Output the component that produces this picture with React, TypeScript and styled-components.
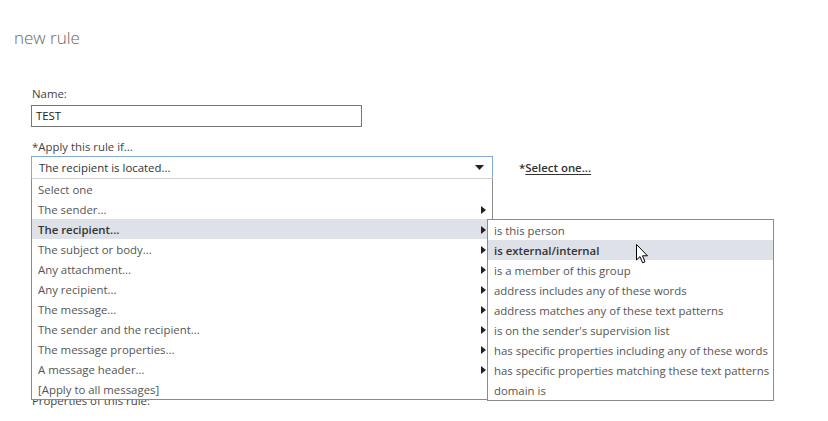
import React from "react";
import styled, { createGlobalStyle } from "styled-components";

const GlobalStyle = createGlobalStyle`
  body {
    margin: 0;
    background: #ffffff;
    font-family: "Open Sans", "Noto Sans", sans-serif;
    color: #444;
  }
`;

const conditions = [
  { label: "Select one", sub: false },
  { label: "The sender...", sub: true },
  { label: "The recipient...", sub: true, active: true },
  { label: "The subject or body...", sub: true },
  { label: "Any attachment...", sub: true },
  { label: "Any recipient...", sub: true },
  { label: "The message...", sub: true },
  { label: "The sender and the recipient...", sub: true },
  { label: "The message properties...", sub: true },
  { label: "A message header...", sub: true },
  { label: "[Apply to all messages]", sub: false },
];

const recipientOptions = [
  "is this person",
  "is external/internal",
  "is a member of this group",
  "address includes any of these words",
  "address matches any of these text patterns",
  "is on the sender's supervision list",
  "has specific properties including any of these words",
  "has specific properties matching these text patterns",
  "domain is",
];

const RightArrow = () => (
  <svg width="5" height="8" viewBox="0 0 5 8">
    <path d="M0 0 L5 4 L0 8 Z" fill="#222" />
  </svg>
);

const DownArrow = () => (
  <svg width="9" height="5" viewBox="0 0 9 5">
    <path d="M0 0 L9 0 L4.5 5 Z" fill="#222" />
  </svg>
);

const Cursor = () => (
  <svg width="13" height="20" viewBox="0 0 13 20">
    <path
      d="M0.5 0.5 L0.5 16 L4 12.6 L6.6 18.8 L9 17.8 L6.5 11.8 L11.5 11.8 Z"
      fill="#fff"
      stroke="#000"
      strokeWidth="1"
      strokeLinejoin="round"
    />
  </svg>
);

const App: React.FC = () => {
  return (
    <>
      <GlobalStyle />
      <Page>
        <Title>new rule</Title>
        <Form>
          <Label $gap={3}>Name:</Label>
          <TextInput>TEST</TextInput>
          <Label $gap={1}>*Apply this rule if...</Label>
          <SelectRow>
            <SelectWrap>
              <SelectBox>
                <span>The recipient is located...</span>
                <DownArrow />
              </SelectBox>
              <DropList>
                {conditions.map((c) => (
                  <ListItem key={c.label} $active={c.active}>
                    <span>{c.label}</span>
                    {c.sub && <RightArrow />}
                  </ListItem>
                ))}
              </DropList>
              <SubMenu>
                {recipientOptions.map((o, i) => (
                  <SubItem key={o} $active={i === 1}>
                    {o}
                    {i === 1 && (
                      <CursorSpot>
                        <Cursor />
                      </CursorSpot>
                    )}
                  </SubItem>
                ))}
              </SubMenu>
            </SelectWrap>
            <SelectLink>
              *<u>Select one...</u>
            </SelectLink>
          </SelectRow>
          <Properties>Properties of this rule:</Properties>
        </Form>
      </Page>
    </>
  );
};

export default App;

const Page = styled.div`
  width: 828px;
  height: 421px;
  overflow: hidden;
  position: relative;
`;

const Title = styled.div`
  padding: 26px 0 0 14px;
  font-size: 17px;
  font-weight: 300;
  color: #666;
  line-height: 24px;
`;

const Form = styled.div`
  padding: 36px 0 0 31px;
  display: flex;
  flex-direction: column;
  align-items: flex-start;
  font-size: 11.4px;
`;

const Label = styled.div<{ $gap: number }>`
  line-height: 16px;
  color: #444;
  padding-left: 1px;
  margin-bottom: ${(p) => p.$gap}px;
`;

const TextInput = styled.div`
  box-sizing: border-box;
  width: 331px;
  height: 22px;
  border: 1px solid #777;
  padding: 0 4px;
  line-height: 20px;
  color: #222;
  margin-bottom: 12px;
`;

const SelectRow = styled.div`
  display: flex;
  align-items: center;
`;

const SelectWrap = styled.div`
  position: relative;
`;

const SelectBox = styled.div`
  box-sizing: border-box;
  width: 462px;
  height: 23px;
  border: 1px solid #82aad4;
  display: flex;
  align-items: center;
  justify-content: space-between;
  padding: 0 8px 0 7px;
  color: #333;
`;

const DropList = styled.div`
  position: absolute;
  top: 22px;
  left: 0;
  width: 462px;
  box-sizing: border-box;
  border: 1px solid #8a8a8a;
  border-top-color: #d0d0d0;
  background: #fff;
  z-index: 2;
`;

const ListItem = styled.div<{ $active?: boolean }>`
  height: 20px;
  display: flex;
  align-items: center;
  justify-content: space-between;
  padding: 1px 6px 0 6px;
  box-sizing: border-box;
  color: ${(p) => (p.$active ? "#333" : "#555")};
  font-weight: ${(p) => (p.$active ? 600 : 400)};
  background: ${(p) => (p.$active ? "#dee1e7" : "transparent")};
`;

const SubMenu = styled.div`
  position: absolute;
  top: 63px;
  left: 456px;
  width: 287px;
  box-sizing: border-box;
  border: 1px solid #8a8a8a;
  background: #fff;
  z-index: 3;
`;

const SubItem = styled.div<{ $active?: boolean }>`
  position: relative;
  height: 20px;
  display: flex;
  align-items: center;
  padding: 1px 6px 0;
  box-sizing: border-box;
  white-space: nowrap;
  color: ${(p) => (p.$active ? "#333" : "#555")};
  font-weight: ${(p) => (p.$active ? 600 : 400)};
  background: ${(p) => (p.$active ? "#dee1e7" : "transparent")};
`;

const CursorSpot = styled.span`
  position: absolute;
  left: 148px;
  top: 4px;
  line-height: 0;
`;

const SelectLink = styled.div`
  margin-left: 26px;
  font-weight: 600;
  color: #333;
  & u {
    text-underline-offset: 2px;
  }
`;

const Properties = styled.div`
  margin-top: 214px;
  color: #444;
  padding-left: 1px;
`;
